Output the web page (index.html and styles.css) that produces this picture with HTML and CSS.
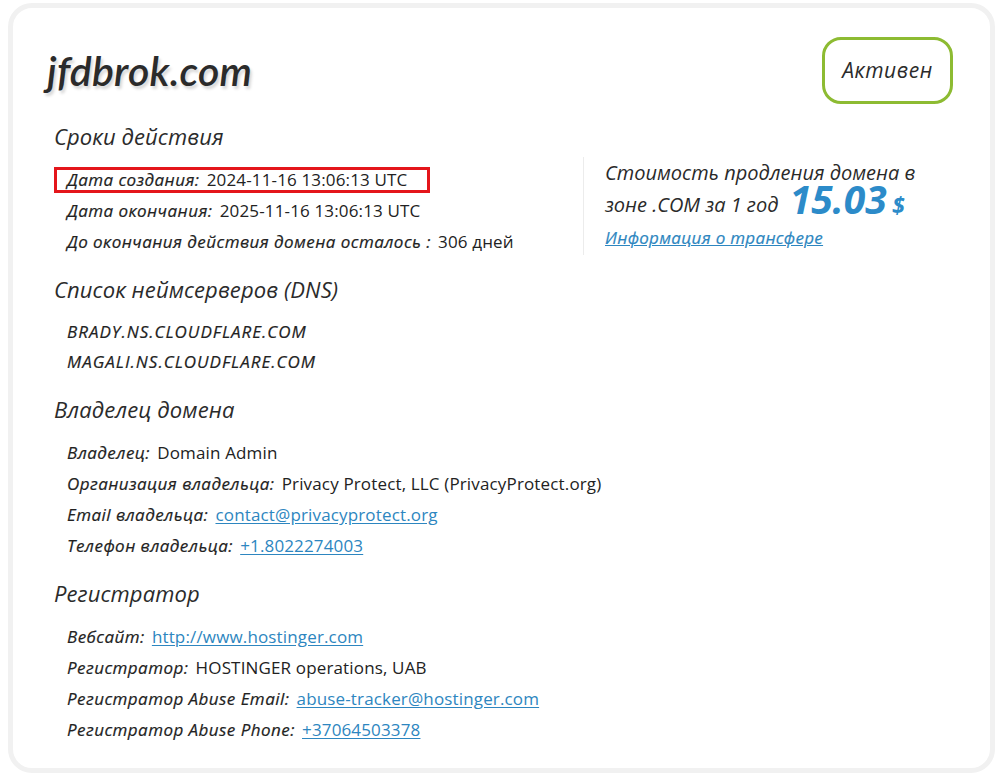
FILE: index.html
```html
<!DOCTYPE html>
<html lang="ru">
<head>
<meta charset="utf-8">
<title>jfdbrok.com</title>
<link rel="stylesheet" href="styles.css">
</head>
<body>
<div class="card">
  <div class="header">
    <h1 class="domain">jfdbrok.com</h1>
    <div class="status">Активен</div>
  </div>

  <div class="top">
    <div class="left">
      <h2 class="heading">Сроки действия</h2>
      <div class="rows">
        <div class="row"><span class="hl"><span class="label">Дата создания:</span> <span class="value">2024-11-16 13:06:13 UTC</span></span></div>
        <div class="row"><span class="label">Дата окончания:</span> <span class="value">2025-11-16 13:06:13 UTC</span></div>
        <div class="row"><span class="label">До окончания действия домена осталось :</span> <span class="value">306 дней</span></div>
      </div>
    </div>
    <div class="right">
      <div class="price-text">Стоимость продления домена в<br>зоне .COM за 1 год <span class="price">15.03</span> <span class="cur">$</span></div>
      <a class="transfer" href="#">Информация о трансфере</a>
    </div>
  </div>

  <h2 class="heading">Список неймсерверов (DNS)</h2>
  <div class="rows ns">
    <div class="row"><span class="label">BRADY.NS.CLOUDFLARE.COM</span></div>
    <div class="row"><span class="label">MAGALI.NS.CLOUDFLARE.COM</span></div>
  </div>

  <h2 class="heading">Владелец домена</h2>
  <div class="rows">
    <div class="row"><span class="label">Владелец:</span> <span class="value">Domain Admin</span></div>
    <div class="row"><span class="label">Организация владельца:</span> <span class="value">Privacy Protect, LLC (PrivacyProtect.org)</span></div>
    <div class="row"><span class="label">Email владельца:</span> <a class="value link" href="#">contact@privacyprotect.org</a></div>
    <div class="row"><span class="label">Телефон владельца:</span> <a class="value link" href="#">+1.8022274003</a></div>
  </div>

  <h2 class="heading">Регистратор</h2>
  <div class="rows">
    <div class="row"><span class="label">Вебсайт:</span> <a class="value link" href="#">http://www.hostinger.com</a></div>
    <div class="row"><span class="label">Регистратор:</span> <span class="value">HOSTINGER operations, UAB</span></div>
    <div class="row"><span class="label">Регистратор Abuse Email:</span> <a class="value link" href="#">abuse-tracker@hostinger.com</a></div>
    <div class="row"><span class="label">Регистратор Abuse Phone:</span> <a class="value link" href="#">+37064503378</a></div>
  </div>
</div>
</body>
</html>
```

FILE: styles.css
```css
html, body {
  margin: 0;
  padding: 0;
  background: #ffffff;
}

body {
  color: #2a2a2a;
  font-family: "Open Sans", "Noto Sans", sans-serif;
}

.card {
  box-sizing: border-box;
  width: 987px;
  height: 770px;
  margin: 3px 0 0 8px;
  border: 5px solid #f1f1f1;
  border-radius: 24px;
  padding: 28px 37px 0 41px;
}

.header {
  display: flex;
  justify-content: space-between;
  align-items: center;
  height: 68px;
}

.domain {
  margin: 0 0 0 -7px;
  font-family: "Lato", "Open Sans", sans-serif;
  font-size: 41px;
  font-weight: 600;
  font-style: italic;
  color: #2b2b2b;
  text-shadow: 2px 3px 3px rgba(0, 0, 0, 0.16);
  letter-spacing: 0.2px;
}

.status {
  box-sizing: border-box;
  width: 131px;
  height: 67px;
  border: 3px solid #8dbb32;
  border-radius: 19px;
  display: flex;
  align-items: center;
  justify-content: center;
  font-style: italic;
  font-size: 21px;
  letter-spacing: 0.6px;
  color: #2b2b2b;
}

.heading {
  margin: 18px 0 0;
  font-size: 22px;
  line-height: 28px;
  font-weight: 400;
  font-style: italic;
  letter-spacing: 0.1px;
  color: #2b2b2b;
}

.rows {
  margin-top: 14px;
  padding-left: 13px;
}

.row {
  line-height: 31px;
  height: 31px;
  font-size: 16px;
  white-space: nowrap;
}

.ns .row {
  line-height: 30px;
  height: 30px;
}

.ns .label {
  letter-spacing: 1px;
}

.label {
  font-style: italic;
  font-size: 17px;
  font-weight: 500;
  letter-spacing: 0.45px;
  color: #222;
  -webkit-text-stroke: 0.2px #222;
  margin-right: 3px;
}

.value {
  font-size: 17px;
  letter-spacing: 0.15px;
  color: #222;
}

.link {
  color: #2d86c0;
  text-decoration: underline;
  text-underline-offset: 2px;
}

.hl {
  display: inline-block;
  line-height: 19px;
  border: 3px solid #e4161b;
  margin: 3px 0 3px -13px;
  padding: 0 20px 0 10px;
  vertical-align: top;
}

.top {
  display: flex;
}

.left {
  flex: 0 0 529px;
}

.right {
  margin-top: 53px;
  height: 98px;
  border-left: 1px solid #ececec;
  padding-left: 21px;
}

.price-text {
  font-style: italic;
  font-size: 20px;
  line-height: 32px;
}

.price {
  font-size: 39px;
  font-weight: 700;
  color: #2c8bc9;
  line-height: 20px;
  margin-left: 6px;
  vertical-align: -2px;
}

.cur {
  font-size: 23px;
  font-weight: 700;
  color: #2c8bc9;
  line-height: 20px;
  vertical-align: -2px;
}

.transfer {
  display: block;
  margin-top: 4px;
  font-style: italic;
  font-weight: 500;
  font-size: 17px;
  line-height: 26px;
  letter-spacing: 0.3px;
  color: #2d86c0;
  -webkit-text-stroke: 0.2px #2d86c0;
  text-decoration: underline;
}
```
